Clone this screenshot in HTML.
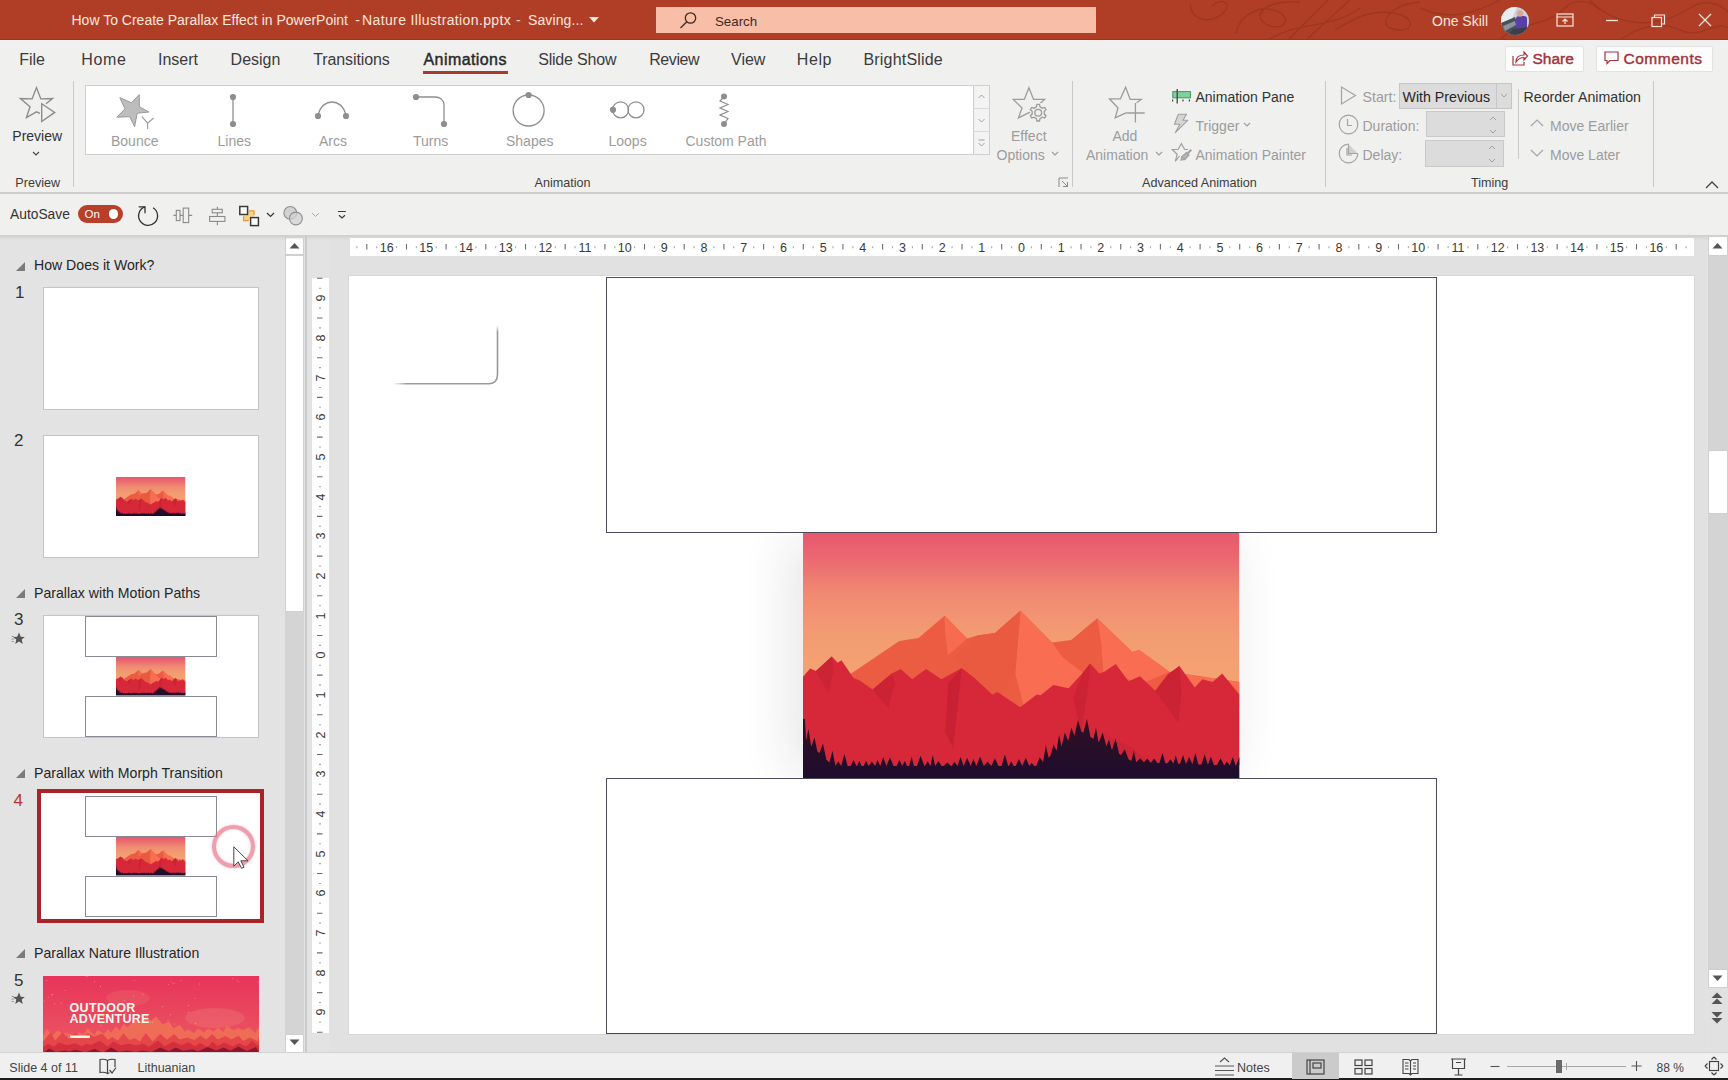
<!DOCTYPE html>
<html><head><meta charset="utf-8">
<style>
*{margin:0;padding:0;box-sizing:border-box}
html,body{width:1728px;height:1080px;overflow:hidden;background:#e3e3e3;font-family:"Liberation Sans",sans-serif;color:#262626;position:relative}
.a{position:absolute;white-space:nowrap;line-height:1}
svg.a{overflow:visible}
#title{left:0;top:0;width:1728px;height:40px;background:#b03e27;overflow:hidden}
#tabs{left:0;top:40px;width:1728px;height:40px;background:#f0f0ef}
#ribbon{left:0;top:80px;width:1728px;height:113px;background:#f0f0ef}
#rbline{left:0;top:192.3px;width:1728px;height:2.2px;background:#cdcdcd}
#qat{left:0;top:194px;width:1728px;height:41px;background:#f0f0ef}
.tt{color:#fbe6dc;font-size:14px;top:13px}
.tab{font-size:16px;top:51.5px;color:#3b3b3b}
.rl{font-size:14px;color:#9c9c9c}
.gl{font-size:12.6px;color:#3c3c3c;top:177px}
.sep{width:1px;background:#c9c9c9}
.rn{font-size:12.5px;color:#3a3a3a;line-height:12px}
.rv{transform:rotate(-90deg);text-align:center}
</style></head><body>
<svg width="0" height="0" style="position:absolute">
<defs>
<linearGradient id="sky" x1="0" y1="0" x2="0" y2="1"><stop offset="0" stop-color="#e8586e"/><stop offset="0.1" stop-color="#eb6870"/><stop offset="0.25" stop-color="#f08a72"/><stop offset="0.42" stop-color="#f39c72"/><stop offset="0.6" stop-color="#f4a373"/><stop offset="1" stop-color="#f5a673"/></linearGradient>
<linearGradient id="forest" x1="0" y1="0" x2="0" y2="1">
<stop offset="0" stop-color="#301024"/><stop offset="1" stop-color="#1e0c2c"/>
</linearGradient>
<symbol id="mtn" viewBox="0 0 436 245" preserveAspectRatio="none">
<rect width="436" height="245" fill="url(#sky)"/>
<polygon fill="#ec5c42" points="40,146 96.3,108.1 115.4,105 141.5,82.7 163.8,105.6 174,102.4 191.8,99.9 217.3,77.7 248.8,109.4 267.9,106.9 294,85.2 329,119 336,117 366,138.7 436,148.9 436,245 0,245"/>
<polygon fill="#f76b50" points="141.5,82.7 163.8,105.6 150,118 144.7,122.1 142,100"/>
<polygon fill="#f96e52" points="217.3,77.7 248.8,109.4 260,125 280,140 250,175 222,178 212,140"/>
<polygon fill="#e95a40" points="217.3,77.7 191.8,99.9 174,102.4 150,125 195,165 212,140"/>
<polygon fill="#f96e52" points="294,85.2 329,119 336,117 366,138.7 340,150 300,140 298,110"/>
<polygon fill="#f96e52" points="366,138.7 436,148.9 436,175 400,170"/>
<polygon fill="#d7283a" points="0,143.8 7.2,135.5 12.9,138 28.8,123.4 34.6,129.8 38.4,127.2 50.5,145 56.8,147.6 69.6,156.5 88.7,140.6 97.6,136.1 109,146.3 123,136.1 138.3,146.3 158.7,134.9 171.4,145 189.2,161.6 194.3,159 217,174.3 233.5,161.6 237.4,162.2 250.1,152 265.4,155.2 279.4,140 287,130.4 296,140.6 301,138.7 312.5,131 325.2,148.2 336.7,143.2 352,157.8 364.7,141.2 376.1,133 391.4,154.6 399,146.3 409.2,148.9 418.8,140.6 436,161.6 436,245 0,245"/>
<polygon fill="#cb2234" points="88.7,140.6 69.6,156.5 85,175 92,150"/>
<polygon fill="#cc2335" points="28.8,123.4 12.9,138 25,160 30,140"/>
<polygon fill="#c92133" points="158.7,134.9 145,150 142,200 150,215 155,170"/>
<polygon fill="#cb2234" points="287,130.4 279.4,140 270,165 278,200 284,160"/>
<polygon fill="#cb2234" points="376.1,133 364.7,141.2 352,157.8 375,190 378,160"/>
<polygon fill="#cf2637" points="300,200 330,215 345,230 320,230"/>
<polygon fill="url(#forest)" points="0.0,245.0 0.0,186.0 2.0,186.0 3.0,207.8 5.5,196.0 8.0,212.5 8.5,212.9 11.5,204.4 14.4,218.5 16.4,220.3 19.9,210.5 23.4,226.8 26.4,229.6 29.4,217.7 32.4,233.0 32.4,233.0 35.2,228.2 38.1,233.0 38.1,233.0 41.3,221.0 44.6,233.0 47.6,233.0 50.5,227.1 53.5,233.0 54.0,233.0 56.2,227.8 58.5,233.0 60.5,233.0 63.0,227.8 65.5,233.0 65.5,233.0 68.8,228.6 72.0,233.0 72.0,233.0 74.6,227.1 77.1,233.0 77.1,233.0 80.2,224.1 83.3,233.0 83.3,233.0 86.9,224.2 90.5,233.0 93.5,233.0 96.3,227.0 99.1,233.0 99.1,233.0 101.6,227.9 104.1,233.0 106.1,233.0 108.5,223.4 110.8,233.0 113.8,233.0 117.5,222.7 121.3,233.0 121.8,233.0 124.5,228.2 127.3,233.0 127.3,233.0 129.6,222.1 132.0,233.0 132.0,233.0 135.3,228.0 138.5,233.0 140.5,233.0 144.2,229.5 147.8,233.0 148.3,233.0 151.3,228.9 154.3,233.0 154.3,233.0 157.4,224.0 160.5,233.0 160.5,233.0 164.0,224.7 167.5,233.0 167.5,233.0 170.3,225.7 173.2,233.0 173.2,233.0 177.0,223.6 180.7,233.0 180.7,233.0 184.4,228.4 188.1,233.0 188.1,233.0 191.7,225.2 195.3,233.0 198.3,233.0 201.7,221.5 205.1,233.0 205.6,233.0 208.0,228.2 210.5,233.0 212.5,233.0 215.8,225.9 219.0,233.0 219.0,233.0 222.6,224.7 226.1,233.0 226.1,233.0 228.5,229.7 231.0,233.0 233.0,233.0 236.4,224.2 239.9,229.0 239.9,229.0 242.6,212.2 245.3,224.4 247.3,222.8 250.3,211.5 253.3,217.8 253.3,217.8 255.8,201.8 258.3,213.6 258.3,213.6 261.6,199.4 264.9,208.1 264.9,208.1 268.1,194.4 271.2,202.8 271.2,202.8 274.7,186.9 278.1,198.6 280.1,199.8 283.7,185.7 287.2,204.0 290.2,205.7 292.7,194.5 295.2,208.7 295.7,209.0 299.4,199.3 303.1,213.3 303.1,213.3 305.7,206.6 308.4,216.3 308.9,216.6 312.3,205.2 315.8,220.7 317.8,221.9 321.5,216.2 325.2,226.2 328.2,227.9 330.5,217.3 332.8,229.1 333.3,229.1 337.0,225.3 340.7,229.4 340.7,229.4 343.9,225.5 347.1,229.6 347.6,229.7 350.8,225.5 354.1,229.9 356.1,230.0 359.1,219.7 362.1,230.2 364.1,230.3 367.1,226.2 370.1,230.5 370.1,230.5 372.4,222.4 374.8,230.7 376.8,230.8 379.7,221.9 382.6,231.0 382.6,231.0 385.8,223.7 389.0,231.2 389.0,231.2 392.0,219.9 395.0,231.5 398.0,231.6 401.3,221.2 404.5,231.8 404.5,231.8 407.5,223.4 410.5,232.0 413.5,232.1 417.2,225.3 420.8,232.4 420.8,232.4 423.6,228.4 426.3,232.6 426.3,232.6 429.3,223.9 432.4,232.9 432.4,232.9 436.1,223.8 439.8,233.1 436.0,232.0 436.0,245.0"/>
</symbol>
</defs></svg>
<!-- TITLE BAR -->
<div id="title" class="a">
<svg class="a" style="left:1180px;top:0" width="548" height="40" viewBox="1180 0 548 40" fill="none" stroke="#8e3019" stroke-width="1.4" opacity="0.5">
<path d="M1190,4 C1192,22 1212,24 1224,12 C1233,3 1222,-3 1212,6"/>
<path d="M1236,34 C1240,12 1266,2 1282,14 C1294,26 1272,32 1262,21 C1255,12 1268,0 1300,2"/>
<path d="M1288,40 L1330,-2 M1306,40 L1352,-2 M1268,40 C1300,20 1330,30 1360,8"/>
<path d="M1335,30 C1355,18 1372,8 1398,14 C1420,20 1410,36 1390,28 C1378,22 1392,4 1420,2"/>
<path d="M1420,8 C1450,22 1478,12 1500,0"/>
<path d="M1500,40 C1515,22 1545,28 1565,8 C1575,-2 1590,0 1600,10"/>
<path d="M1590,0 C1610,22 1650,34 1690,8 C1705,-2 1720,4 1728,12"/>
<path d="M1620,40 C1640,25 1665,22 1680,30 C1700,40 1715,20 1728,28"/>
</svg>
</div>
<div class="a tt" style="left:71.5px;">How To Create Parallax Effect in PowerPoint</div><div class="a tt" style="left:355.3px;">-</div><div class="a tt" style="left:362px;letter-spacing:0.38px">Nature Illustration.pptx</div><div class="a tt" style="left:516px;">-</div><div class="a tt" style="left:528px;letter-spacing:0.1px">Saving...</div>
<svg class="a" style="left:589px;top:16.5px" width="10" height="6" viewBox="0 0 10 6"><path d="M0,0 L10,0 L5,5.5Z" fill="#fbe6dc"/></svg>
<div class="a" style="left:656px;top:7px;width:440px;height:26px;background:#f8bea7"></div>
<svg class="a" style="left:678px;top:11px" width="20" height="18" viewBox="0 0 20 18" fill="none" stroke="#3d2a24" stroke-width="1.3"><circle cx="12.5" cy="7" r="5.2"/><path d="M8.8,10.7 L2.5,17"/></svg>
<div class="a" style="left:715px;top:14.5px;font-size:13.3px;color:#3d2a24">Search</div>
<div class="a tt" style="left:1432px;top:14px;">One Skill</div>
<svg class="a" style="left:1500.5px;top:6.5px" width="28" height="28" viewBox="0 0 28 28"><defs><clipPath id="av"><circle cx="14" cy="14" r="14"/></clipPath></defs><g clip-path="url(#av)"><rect width="28" height="28" fill="#c9d2dc"/><polygon points="0,0 16,0 10,14 0,18" fill="#e8edf2"/><polygon points="0,16 14,10 18,20 10,28 0,28" fill="#4a5058"/><polygon points="2,19 14,14 15,18 4,24" fill="#8c959e"/><rect x="15" y="9" width="11" height="14" rx="3" fill="#5b3fa8"/><circle cx="19" cy="6.5" r="3.2" fill="#d8a890"/><polygon points="12,22 28,20 28,28 8,28" fill="#3a3f4a"/></g></svg>
<svg class="a" style="left:1556px;top:13px" width="19" height="14" viewBox="0 0 19 14" fill="none" stroke="#fbe6dc" stroke-width="1.2"><rect x="1" y="1" width="16" height="12"/><path d="M1,4 H17 M9,11 V6 M6.5,8.5 L9,6 L11.5,8.5"/></svg>
<svg class="a" style="left:1605px;top:19px" width="14" height="3" viewBox="0 0 14 3"><path d="M1,1.5 H13" stroke="#fbe6dc" stroke-width="1.3"/></svg>
<svg class="a" style="left:1651px;top:14px" width="15" height="13" viewBox="0 0 15 13" fill="none" stroke="#fbe6dc" stroke-width="1.2"><rect x="1" y="3.5" width="9.5" height="9"/><path d="M3.5,3.5 V1 H13.5 V10 H10.5"/></svg>
<svg class="a" style="left:1698px;top:13px" width="14" height="14" viewBox="0 0 14 14"><path d="M1,1 L13,13 M13,1 L1,13" stroke="#fbe6dc" stroke-width="1.3"/></svg>

<div class="a" style="left:0;top:39.3px;width:1728px;height:0.8px;background:#8e3a2a"></div>
<!-- TABS -->
<div id="tabs" class="a"></div>
<div class="a tab" style="left:19.2px">File</div>
<div class="a tab" style="left:81.2px;letter-spacing:0.7px">Home</div>
<div class="a tab" style="left:158px">Insert</div>
<div class="a tab" style="left:230.6px">Design</div>
<div class="a tab" style="left:313.2px;letter-spacing:-0.1px">Transitions</div>
<div class="a tab" style="left:423.5px;color:#2a2a2a;font-size:16px;top:52.2px;letter-spacing:0.42px;-webkit-text-stroke:0.45px #2a2a2a">Animations</div>
<div class="a" style="left:423px;top:70.8px;width:84.5px;height:3.2px;background:#a83a30"></div>
<div class="a tab" style="left:538.2px;letter-spacing:-0.2px">Slide Show</div>
<div class="a tab" style="left:649.2px;letter-spacing:-0.4px">Review</div>
<div class="a tab" style="left:731px">View</div>
<div class="a tab" style="left:796.8px;letter-spacing:0.6px">Help</div>
<div class="a tab" style="left:863.5px;letter-spacing:0.18px">BrightSlide</div>
<div class="a" style="left:1505px;top:46px;width:79px;height:26px;background:#fcfcfc;border:1px solid #e2e2e2;border-radius:2px"></div>
<svg class="a" style="left:1512px;top:50px" width="16" height="16" viewBox="0 0 16 16" fill="none" stroke="#a8343a" stroke-width="1.2"><path d="M1,6 V15 H12 V12"/><path d="M4,12 C4,7 7,5 12,5 V2 L15.5,6 L12,10 V7.5 C8,7.5 6,9 4,12Z"/></svg>
<div class="a" style="left:1532.5px;top:51px;font-size:15.5px;color:#a1313a;-webkit-text-stroke:0.4px #a1313a">Share</div>
<div class="a" style="left:1596px;top:46px;width:117px;height:26px;background:#fcfcfc;border:1px solid #e2e2e2;border-radius:2px"></div>
<svg class="a" style="left:1604px;top:51px" width="15" height="14" viewBox="0 0 15 14" fill="none" stroke="#a8343a" stroke-width="1.2"><path d="M1,1 H14 V9.5 H6 L3,12.5 V9.5 H1Z"/></svg>
<div class="a" style="left:1623.5px;top:51px;font-size:15.5px;color:#a1313a;-webkit-text-stroke:0.4px #a1313a;letter-spacing:0.5px">Comments</div>
<!-- RIBBON -->
<div id="ribbon" class="a"></div>

<!-- Preview group -->
<svg class="a" style="left:10px;top:82px" width="60" height="45" viewBox="10 82 60 45" fill="none" stroke="#8c8c8c" stroke-width="1.4" stroke-linejoin="miter"><path d="M40,113.4 L36.5,111.8 L26.5,117.6 L30,106.7 L20.4,98.5 L32.1,98.9 L36.5,87.6 L40.8,98.9 L52.5,98.5 L46,103.7"/><path d="M41.7,103.7 V121.5 L54.7,112.4 Z"/></svg>
<div class="a" style="left:12.3px;top:128.5px;font-size:14px;color:#333">Preview</div>
<svg class="a" style="left:32px;top:151px" width="8" height="5" viewBox="0 0 8 5"><path d="M1,1 L4,4 L7,1" fill="none" stroke="#444" stroke-width="1.1"/></svg>
<div class="a gl" style="left:15.3px">Preview</div>
<div class="a sep" style="left:73px;top:81px;height:106px"></div>
<!-- Gallery -->
<div class="a" style="left:85px;top:84.5px;width:889px;height:70.5px;background:#fff;border:1px solid #cfcfcf;border-right:none"></div>
<div class="a" style="left:973px;top:84.5px;width:17px;height:70.5px;background:#f3f3f3;border:1px solid #cfcfcf"></div>
<div class="a" style="left:973px;top:107.5px;width:17px;height:1px;background:#d8d8d8"></div>
<div class="a" style="left:973px;top:130.5px;width:17px;height:1px;background:#d8d8d8"></div>
<svg class="a" style="left:977px;top:92px" width="9" height="60" viewBox="0 0 9 60" fill="none" stroke="#a0a0a0" stroke-width="1"><path d="M1.5,6 L4.5,3 L7.5,6"/><path d="M1.5,27 L4.5,30 L7.5,27"/><path d="M1.5,48 H7.5 M1.5,51 L4.5,54 L7.5,51"/></svg>
<!-- gallery icons -->
<svg class="a" style="left:110px;top:88px" width="50" height="45" viewBox="110 88 50 45"><path d="M139.3,94.6 L139.3,106.7 L148.9,112 L137.2,113.25 L134.6,126.7 L129.8,116.7 L116.8,117.2 L125,108.9 L119.8,97.6 L131.5,102.8 Z" fill="#bdbdbd" stroke="#9a9a9a" stroke-width="1" stroke-linejoin="miter"/><path d="M142,116.7 L147.6,123.2 L153.7,118 M147.6,123.2 V128.9" fill="none" stroke="#9a9a9a" stroke-width="1.1"/></svg>
<svg class="a" style="left:228px;top:93px" width="10" height="34" viewBox="0 0 10 34"><circle cx="5" cy="4" r="3.1" fill="#8e8e8e"/><circle cx="5" cy="31" r="3.1" fill="#8e8e8e"/><path d="M5,4 V31" stroke="#8e8e8e" stroke-width="1.3"/></svg>
<svg class="a" style="left:314px;top:99px" width="36" height="21" viewBox="0 0 36 21"><path d="M4,17 C6,6 13,3 18,3 C23,3 30,6 32,17" fill="none" stroke="#8e8e8e" stroke-width="1.3"/><circle cx="4" cy="17" r="3.1" fill="#8e8e8e"/><circle cx="32" cy="17" r="3.1" fill="#8e8e8e"/></svg>
<svg class="a" style="left:412px;top:93px" width="37" height="34" viewBox="0 0 37 34"><path d="M4,4 H23 C28,4 32,7 32,12 V31" fill="none" stroke="#8e8e8e" stroke-width="1.3"/><circle cx="4" cy="4" r="3.1" fill="#8e8e8e"/><circle cx="32" cy="31" r="3.1" fill="#8e8e8e"/></svg>
<svg class="a" style="left:510px;top:92px" width="38" height="38" viewBox="0 0 38 38"><circle cx="18.6" cy="18.5" r="15.5" fill="none" stroke="#8e8e8e" stroke-width="1.3"/><circle cx="18.6" cy="3" r="3.1" fill="#8e8e8e"/></svg>
<svg class="a" style="left:606px;top:98px" width="42" height="24" viewBox="0 0 42 24"><circle cx="14.6" cy="11.8" r="8" fill="none" stroke="#8e8e8e" stroke-width="1.3"/><circle cx="30" cy="11.8" r="8" fill="none" stroke="#8e8e8e" stroke-width="1.3"/><circle cx="7" cy="11.8" r="3.1" fill="#8e8e8e"/></svg>
<svg class="a" style="left:716px;top:93px" width="16" height="34" viewBox="0 0 16 34"><circle cx="8" cy="3.5" r="3" fill="#8e8e8e"/><circle cx="8" cy="31" r="3" fill="#8e8e8e"/><path d="M8,3.5 L4,8 L12,11.5 L4,15 L12,18.5 L4,22 L12,25.5 L8,31" fill="none" stroke="#8e8e8e" stroke-width="1.2"/></svg>
<div class="a rl" style="left:111px;top:133.5px">Bounce</div>
<div class="a rl" style="left:217.5px;top:133.5px">Lines</div>
<div class="a rl" style="left:319px;top:133.5px">Arcs</div>
<div class="a rl" style="left:413px;top:133.5px">Turns</div>
<div class="a rl" style="left:506px;top:133.5px">Shapes</div>
<div class="a rl" style="left:608.5px;top:133.5px">Loops</div>
<div class="a rl" style="left:685.5px;top:133.5px">Custom Path</div>
<div class="a gl" style="left:534.5px">Animation</div>
<!-- Effect options -->
<svg class="a" style="left:1005px;top:82px" width="50" height="45" viewBox="1005 82 50 45" fill="none" stroke="#9c9c9c" stroke-width="1.3" stroke-linejoin="miter"><path d="M1030,112.2 L1018.5,117.9 L1022,108 L1013.3,99.4 L1024.3,99.4 L1028.9,87.8 L1033.6,99.4 L1044.6,99.4 L1040.5,103"/><path d="M1036.39,106.77 L1036.89,104.40 L1039.51,104.40 L1040.01,106.77 L1042.43,108.17 L1044.73,107.41 L1046.04,109.69 L1044.24,111.31 L1044.24,114.09 L1046.04,115.71 L1044.73,117.99 L1042.43,117.23 L1040.01,118.63 L1039.51,121.00 L1036.89,121.00 L1036.39,118.63 L1033.97,117.23 L1031.67,117.99 L1030.36,115.71 L1032.16,114.09 L1032.16,111.31 L1030.36,109.69 L1031.67,107.41 L1033.97,108.17Z"/><circle cx="1038.2" cy="112.7" r="3.4"/></svg>
<div class="a rl" style="left:1011px;top:128.5px">Effect</div>
<div class="a rl" style="left:996.5px;top:148px">Options</div>
<svg class="a" style="left:1051px;top:151px" width="8" height="5" viewBox="0 0 8 5"><path d="M1,1 L4,4 L7,1" fill="none" stroke="#9c9c9c" stroke-width="1.1"/></svg>
<svg class="a" style="left:1058px;top:177px" width="11" height="11" viewBox="0 0 11 11" fill="none" stroke="#8a8a8a" stroke-width="1"><path d="M1,10 V1 H10 M4,4 L9.5,9.5 M9.5,5 V9.5 H5"/></svg>
<div class="a sep" style="left:1072px;top:81px;height:106px"></div>
<!-- Advanced Animation -->
<svg class="a" style="left:1100px;top:82px" width="50" height="45" viewBox="1100 82 50 45" fill="none" stroke="#9c9c9c" stroke-width="1.3" stroke-linejoin="miter"><path d="M1126.5,112.7 L1115.2,117.9 L1118,108 L1109.4,98.8 L1120.4,98.8 L1125.6,87.2 L1130.2,99.4 L1141.2,99.4 L1136.6,102.8"/><path d="M1135.4,103 V122.5 M1126.7,113 H1144.7"/></svg>
<div class="a rl" style="left:1112.5px;top:128.5px">Add</div>
<div class="a rl" style="left:1086px;top:148px">Animation</div>
<svg class="a" style="left:1155px;top:151px" width="8" height="5" viewBox="0 0 8 5"><path d="M1,1 L4,4 L7,1" fill="none" stroke="#9c9c9c" stroke-width="1.1"/></svg>
<svg class="a" style="left:1168px;top:86px" width="26" height="20" viewBox="1168 86 26 20"><rect x="1172.8" y="91.6" width="17.6" height="6.2" fill="#7fd09b" stroke="#3c9a5f" stroke-width="1"/><path d="M1177.2,89 V103.5" stroke="#444" stroke-width="1.3"/><path d="M1172.6,99.5 V101.5 M1183,99.5 V101.5 M1189.4,99.5 V101.5" stroke="#444" stroke-width="1.2"/></svg>
<div class="a" style="left:1195.5px;top:89.5px;font-size:14px;color:#333">Animation Pane</div>
<svg class="a" style="left:1170px;top:110px" width="22" height="26" viewBox="1170 110 22 26"><path d="M1186.5,114.3 L1178.4,114.3 L1174.4,124.3 L1179.9,124.3 L1175.3,132.7 L1187.7,120.3 L1182.9,120.3 Z" fill="#d6d6d6" stroke="#a0a0a0" stroke-width="1.1" stroke-linejoin="round"/></svg>
<div class="a rl" style="left:1195.5px;top:118.5px">Trigger</div>
<svg class="a" style="left:1243px;top:122px" width="8" height="5" viewBox="0 0 8 5"><path d="M1,1 L4,4 L7,1" fill="none" stroke="#9c9c9c" stroke-width="1.1"/></svg>
<svg class="a" style="left:1168px;top:140px" width="26" height="26" viewBox="1168 140 26 26" fill="none" stroke="#a0a0a0" stroke-width="1.2"><path d="M1179.5,156 L1175.3,161.3 L1177.1,154.3 L1172.3,149.5 L1178,149.5 L1181.4,143.8 L1184.7,149.5 L1188,149.5"/><path d="M1182,156.5 L1186.5,152.5 L1189,155 L1184.8,159.5 Z" fill="#b4b4b4"/><path d="M1187.5,153.5 L1191.3,149.7" stroke-width="2"/><path d="M1182,156.5 L1181,160 L1184.8,159.5" fill="#b4b4b4"/></svg>
<div class="a rl" style="left:1195.5px;top:148px">Animation Painter</div>
<div class="a gl" style="left:1142px">Advanced Animation</div>
<div class="a sep" style="left:1325px;top:81px;height:106px"></div>
<!-- Timing -->
<svg class="a" style="left:1340px;top:86px" width="17" height="19" viewBox="0 0 17 19" fill="none" stroke="#a4a4a4" stroke-width="1.2"><path d="M1.5,1 V18 L15.5,9.5Z"/></svg>
<div class="a rl" style="left:1362.5px;top:90px;font-size:14.2px">Start:</div>
<div class="a" style="left:1399px;top:82.5px;width:113px;height:26px;background:#dcdcdc;border:1px solid #c6c6c6"></div>
<div class="a" style="left:1496px;top:83px;width:1px;height:25px;background:#c6c6c6"></div>
<svg class="a" style="left:1500px;top:93px" width="8" height="5" viewBox="0 0 8 5"><path d="M1,1 L4,4 L7,1" fill="none" stroke="#a0a0a0" stroke-width="1"/></svg>
<div class="a" style="left:1402.5px;top:89.5px;font-size:14.2px;color:#262626">With Previous</div>
<svg class="a" style="left:1338px;top:114px" width="21" height="21" viewBox="0 0 21 21" fill="none" stroke="#a4a4a4" stroke-width="1.2"><circle cx="10.5" cy="10.5" r="9.3"/><path d="M9.5,5 V11.5 H14"/></svg>
<div class="a rl" style="left:1362.5px;top:118.5px">Duration:</div>
<div class="a" style="left:1426px;top:111px;width:78.5px;height:26px;background:#dcdcdc;border:1px solid #c9c9c9"></div>
<svg class="a" style="left:1488px;top:115px" width="10" height="20" viewBox="0 0 10 20" fill="none" stroke="#a0a0a0" stroke-width="1"><path d="M2,5 L5,2 L8,5 M2,15 L5,18 L8,15"/></svg>
<svg class="a" style="left:1338px;top:143px" width="21" height="21" viewBox="0 0 21 21" fill="none" stroke="#a4a4a4" stroke-width="1.2"><path d="M10.5,1.2 A9.3,9.3 0 1 0 19.8,10.5"/><path d="M10.5,1.2 V10.5 H19.8" fill="#d0d0d0"/><path d="M9,5 V12 H14"/></svg>
<div class="a rl" style="left:1362.5px;top:148px">Delay:</div>
<div class="a" style="left:1424.5px;top:139.5px;width:79px;height:27px;background:#dcdcdc;border:1px solid #c9c9c9"></div>
<svg class="a" style="left:1487px;top:144px" width="10" height="20" viewBox="0 0 10 20" fill="none" stroke="#a0a0a0" stroke-width="1"><path d="M2,5 L5,2 L8,5 M2,15 L5,18 L8,15"/></svg>
<div class="a sep" style="left:1518px;top:89px;height:70px"></div>
<div class="a" style="left:1523.5px;top:89.5px;font-size:14.2px;color:#333">Reorder Animation</div>
<svg class="a" style="left:1530px;top:119px" width="14" height="8" viewBox="0 0 14 8"><path d="M1,7 L7,1 L13,7" fill="none" stroke="#a4a4a4" stroke-width="1.2"/></svg>
<div class="a rl" style="left:1550px;top:118.5px">Move Earlier</div>
<svg class="a" style="left:1530px;top:149px" width="14" height="8" viewBox="0 0 14 8"><path d="M1,1 L7,7 L13,1" fill="none" stroke="#a4a4a4" stroke-width="1.2"/></svg>
<div class="a rl" style="left:1550px;top:148px">Move Later</div>
<div class="a gl" style="left:1471px">Timing</div>
<div class="a sep" style="left:1653px;top:81px;height:106px"></div>
<svg class="a" style="left:1705px;top:181px" width="14" height="8" viewBox="0 0 14 8"><path d="M1,7 L7,1 L13,7" fill="none" stroke="#444" stroke-width="1.3"/></svg>
<!-- QAT -->
<div id="qat" class="a"></div>
<div id="rbline" class="a"></div>
<div class="a" style="left:10px;top:208px;font-size:13.8px;color:#333">AutoSave</div>
<div class="a" style="left:77.5px;top:204.5px;width:45.5px;height:18.5px;border-radius:9.5px;background:#b8402a"></div>
<div class="a" style="left:84.5px;top:208.5px;font-size:11.5px;color:#fff">On</div>
<div class="a" style="left:108.5px;top:209px;width:9.5px;height:9.5px;border-radius:50%;background:#fff"></div>
<svg class="a" style="left:130px;top:200px" width="30" height="30" viewBox="130 200 30 30" fill="none" stroke="#333" stroke-width="1.3"><path d="M153.1,207.8 A9.5,9.5 0 1 1 145,206.9"/><path d="M138.7,206.9 H145 V213.3"/></svg>
<svg class="a" style="left:170px;top:204px" width="26" height="22" viewBox="170 204 26 22" fill="#f0f0ef" stroke="#8a8a8a" stroke-width="1.1"><path d="M173.4,215.4 H176.3 M180,215.4 H183.2 M188.7,215.4 H192.2"/><rect x="176.3" y="210.4" width="3.7" height="10.2"/><rect x="183.2" y="208.1" width="5.5" height="14.5"/></svg>
<svg class="a" style="left:206px;top:204px" width="22" height="24" viewBox="206 204 22 24" fill="#f0f0ef" stroke="#8a8a8a" stroke-width="1.1"><path d="M217.4,206.7 V209.3 M217.4,212.8 V216.5 M217.4,221.4 V225.2"/><rect x="212.2" y="209.3" width="10.1" height="3.5"/><rect x="209.6" y="216.5" width="15.3" height="4.9"/></svg>
<svg class="a" style="left:236px;top:203px" width="26" height="26" viewBox="236 203 26 26" fill="none"><path d="M248.4,210.8 H254 V216.5 H249.5 V220.6 H243.6 V215.5 H248.4Z" fill="#fbd27a" stroke="none"/><path d="M249,210.8 H254 V215.2 M243.6,216.2 V220.6 H248.6" stroke="#e89a3a" stroke-width="1.2"/><rect x="239.8" y="206.5" width="7.8" height="8" fill="#fff" stroke="#3a3a3a" stroke-width="1.5"/><rect x="250.6" y="217.6" width="7.8" height="8" fill="#fff" stroke="#3a3a3a" stroke-width="1.5"/></svg>
<svg class="a" style="left:266px;top:212px" width="9" height="6" viewBox="0 0 9 6"><path d="M1,1 L4.5,4.5 L8,1" fill="none" stroke="#333" stroke-width="1.2"/></svg>
<svg class="a" style="left:280px;top:203px" width="26" height="26" viewBox="280 203 26 26" stroke="#8e8e8e" stroke-width="1.1"><circle cx="290.3" cy="212.9" r="6.4" fill="#d2d2d2"/><circle cx="295.9" cy="218.5" r="6.4" fill="#d2d2d2" fill-opacity="0.75"/></svg>
<svg class="a" style="left:311px;top:212px" width="9" height="6" viewBox="0 0 9 6"><path d="M1,1 L4.5,4.5 L8,1" fill="none" stroke="#aaa" stroke-width="1"/></svg>
<svg class="a" style="left:334px;top:207px" width="16" height="14" viewBox="334 207 16 14" fill="none" stroke="#3a3a3a" stroke-width="1.2"><path d="M337.9,211.5 H345.9 M339,215.2 L342,218 L345,215.2"/></svg>

<!-- LEFT PANE -->
<div class="a" style="left:0;top:235px;width:306px;height:817px;background:#e3e3e3"></div>
<div class="a" style="left:284.5px;top:236.5px;width:19.5px;height:815px;background:#d4d4d4"></div>
<div class="a" style="left:284.5px;top:255px;width:19.5px;height:357px;background:#fff;border:1px solid #cfcfcf"></div>
<div class="a" style="left:284.5px;top:236.5px;width:19.5px;height:18.5px;background:#fff;border:1px solid #cfcfcf"></div>
<svg class="a" style="left:289px;top:242px" width="11" height="7" viewBox="0 0 11 7"><path d="M0.5,6.5 L5.5,1 L10.5,6.5Z" fill="#555"/></svg>
<div class="a" style="left:284.5px;top:1033.5px;width:19.5px;height:19px;background:#fff;border:1px solid #cfcfcf"></div>
<svg class="a" style="left:289px;top:1039px" width="11" height="7" viewBox="0 0 11 7"><path d="M0.5,0.5 L5.5,6 L10.5,0.5Z" fill="#555"/></svg>
<div class="a" style="left:305px;top:235px;width:1.5px;height:817px;background:#c9c9c9"></div>

<svg class="a" style="left:16px;top:262px" width="9" height="9" viewBox="0 0 9 9"><path d="M9,0 V9 H0Z" fill="#7a7a7a"/></svg>
<div class="a" style="left:34px;top:258px;font-size:14.1px;color:#262626">How Does it Work?</div>
<div class="a" style="left:15px;top:284px;font-size:17px;color:#333">1</div>
<div class="a" style="left:42.5px;top:287px;width:216.5px;height:122.5px;background:#fff;border:1px solid #c4c4c4"></div>

<div class="a" style="left:14px;top:432px;font-size:17px;color:#333">2</div>
<div class="a" style="left:42.5px;top:434.5px;width:216.5px;height:123px;background:#fff;border:1px solid #c4c4c4"></div>
<svg class="a" style="left:116px;top:476.5px" width="69.5" height="39" preserveAspectRatio="none"><use href="#mtn" width="69.5" height="39"/></svg>

<svg class="a" style="left:16px;top:589px" width="9" height="9" viewBox="0 0 9 9"><path d="M9,0 V9 H0Z" fill="#7a7a7a"/></svg>
<div class="a" style="left:34px;top:585.5px;font-size:14.1px;color:#262626">Parallax with Motion Paths</div>
<div class="a" style="left:14px;top:611px;font-size:17px;color:#333">3</div>
<svg class="a" style="left:11px;top:632px" width="14" height="13" viewBox="0 0 14 13"><path d="M8,0.5 L9.8,4.8 L13.8,5 L10.7,7.6 L11.7,12 L8,9.5 L4.3,12 L5.3,7.6 L2.2,5 L6.2,4.8Z" fill="#555"/><path d="M0.5,4.5 H3 M0.5,7 H3.5 M0.5,9.5 H3" stroke="#888" stroke-width="0.8"/></svg>
<div class="a" style="left:42.5px;top:614.5px;width:216.5px;height:123px;background:#fff;border:1px solid #c4c4c4"></div>
<div class="a" style="left:84.5px;top:615.5px;width:132.5px;height:41.5px;background:#fff;border:1px solid #8a8a96"></div>
<svg class="a" style="left:116px;top:657px" width="69.5" height="38.5" preserveAspectRatio="none"><use href="#mtn" width="69.5" height="38.5"/></svg>
<div class="a" style="left:84.5px;top:695.5px;width:132.5px;height:41.5px;background:#fff;border:1px solid #8a8a96"></div>

<svg class="a" style="left:16px;top:769px" width="9" height="9" viewBox="0 0 9 9"><path d="M9,0 V9 H0Z" fill="#7a7a7a"/></svg>
<div class="a" style="left:34px;top:765.5px;font-size:14.1px;color:#262626">Parallax with Morph Transition</div>
<div class="a" style="left:13.5px;top:791.5px;font-size:17px;color:#b8322e">4</div>
<div class="a" style="left:37px;top:789px;width:227px;height:134px;background:#fff;border:4.5px solid #a82428"></div>
<div class="a" style="left:84.5px;top:795.5px;width:132.5px;height:41.5px;background:#fff;border:1px solid #8a8a96"></div>
<svg class="a" style="left:116px;top:837px" width="69.5" height="38.5" preserveAspectRatio="none"><use href="#mtn" width="69.5" height="38.5"/></svg>
<div class="a" style="left:84.5px;top:875.5px;width:132.5px;height:41.5px;background:#fff;border:1px solid #8a8a96"></div>
<div class="a" style="left:211.6px;top:824.8px;width:43px;height:43px;border-radius:50%;border:4px solid rgba(232,120,140,0.72);box-shadow:0 0 2.5px rgba(232,120,140,0.55), inset 0 0 2.5px rgba(232,120,140,0.55)"></div>
<svg class="a" style="left:232.6px;top:846.4px" width="17" height="24" viewBox="0 0 17 24"><path d="M0.8,0.8 V20.2 L5.2,15.8 L8.6,22.4 L11,21.2 L7.8,14.8 L15,14.8 Z" fill="#fff" stroke="#333" stroke-width="0.9" stroke-linejoin="miter"/></svg>

<svg class="a" style="left:16px;top:949px" width="9" height="9" viewBox="0 0 9 9"><path d="M9,0 V9 H0Z" fill="#7a7a7a"/></svg>
<div class="a" style="left:34px;top:945.5px;font-size:14.1px;color:#262626">Parallax Nature Illustration</div>
<div class="a" style="left:14px;top:971.5px;font-size:17px;color:#333">5</div>
<svg class="a" style="left:11px;top:992px" width="14" height="13" viewBox="0 0 14 13"><path d="M8,0.5 L9.8,4.8 L13.8,5 L10.7,7.6 L11.7,12 L8,9.5 L4.3,12 L5.3,7.6 L2.2,5 L6.2,4.8Z" fill="#555"/><path d="M0.5,4.5 H3 M0.5,7 H3.5 M0.5,9.5 H3" stroke="#888" stroke-width="0.8"/></svg>
<div class="a" style="left:42.5px;top:975.5px;width:216px;height:77px;overflow:hidden">
<svg width="216" height="122" viewBox="0 0 216 122" style="position:absolute;left:0;top:0">
<defs><linearGradient id="t5" x1="0" y1="0" x2="0" y2="1"><stop offset="0" stop-color="#e8345a"/><stop offset="0.45" stop-color="#ea4f60"/><stop offset="0.75" stop-color="#ee6a64"/><stop offset="1" stop-color="#f07a66"/></linearGradient></defs>
<rect width="216" height="122" fill="url(#t5)"/>
<ellipse cx="172" cy="42" rx="30" ry="10" fill="#f27a78" opacity="0.35"/>
<ellipse cx="85" cy="22" rx="22" ry="8" fill="#f07070" opacity="0.3"/>
<polygon fill="#ef6d57" points="0.0,60.0 3.5,52.7 9.6,59.4 14.6,54.6 20.2,58.1 23.6,56.7 29.9,59.0 35.9,56.8 40.7,58.2 44.6,52.1 51.3,59.6 54.4,53.7 61.1,57.9 65.0,53.0 68.1,57.0 72.8,50.7 76.8,54.4 80.7,48.0 84.8,51.6 91.2,43.2 96.7,46.7 103.7,38.7 107.2,45.3 113.1,40.5 119.8,48.4 126.1,45.6 130.3,52.3 136.9,48.7 141.9,55.8 145.0,53.4 151.2,57.3 154.9,52.6 160.7,56.6 165.2,52.5 170.3,55.5 175.3,51.7 180.3,56.3 183.5,49.6 190.4,54.6 195.0,52.1 200.0,54.1 206.1,51.2 212.5,57.2 216.0,50.5 216.0,122.0 0.0,122.0"/>
<polygon fill="#e4464a" points="0.0,65.5 7.8,56.3 12.1,64.5 19.4,56.6 26.1,62.7 32.5,56.3 38.8,62.6 44.5,57.3 51.4,60.7 59.2,57.5 65.0,63.8 69.2,61.1 75.0,64.4 80.5,57.1 86.6,64.2 91.6,62.1 96.9,65.5 102.9,57.0 109.6,65.5 117.2,58.1 124.1,63.6 131.2,58.1 136.6,63.4 144.4,61.5 151.5,64.1 157.3,59.5 163.3,63.5 169.3,57.9 174.7,63.6 182.3,59.9 188.6,63.5 195.5,59.8 200.3,65.1 207.1,61.5 214.8,65.3 216.0,60.7 216.0,122.0 0.0,122.0"/>
<polygon fill="#d32f3c" points="0.0,71.0 5.2,67.8 11.2,70.7 15.5,66.5 24.1,69.3 31.9,67.3 38.6,70.4 43.5,67.8 48.5,69.1 56.7,64.8 64.7,70.6 70.2,65.6 77.9,69.2 86.3,67.8 93.3,69.6 99.8,67.5 106.2,70.8 114.9,64.6 121.6,70.4 130.2,65.8 138.6,69.2 145.1,66.5 152.1,70.1 156.9,66.9 165.0,70.9 169.2,65.6 174.6,69.9 181.0,66.8 190.0,70.6 196.0,67.3 203.2,70.4 209.0,65.1 214.6,69.8 216.0,67.8 216.0,122.0 0.0,122.0"/>
<polygon fill="#8e1530" points="0.0,77.0 6.2,72.6 13.0,75.9 21.2,74.4 26.2,75.5 32.5,73.8 42.5,76.2 51.7,72.9 59.9,76.7 68.1,71.5 75.7,75.7 84.0,74.4 92.8,75.9 99.3,74.5 108.7,76.1 117.3,71.4 125.8,75.3 132.8,71.5 140.0,74.8 149.4,73.2 155.1,75.2 164.9,71.1 173.1,74.5 180.6,71.5 187.3,74.7 195.3,70.6 203.7,75.0 213.0,70.9 216.0,76.7 216.0,122.0 0.0,122.0"/>
<circle cx="100.0" cy="18.7" r="0.45" fill="#fff" opacity="0.7"/><circle cx="29.9" cy="43.3" r="0.45" fill="#fff" opacity="0.7"/><circle cx="1.4" cy="25.1" r="0.45" fill="#fff" opacity="0.7"/><circle cx="194.0" cy="4.0" r="0.45" fill="#fff" opacity="0.7"/><circle cx="119.7" cy="30.8" r="0.45" fill="#fff" opacity="0.7"/><circle cx="8.8" cy="19.0" r="0.45" fill="#fff" opacity="0.7"/><circle cx="152.0" cy="22.6" r="0.45" fill="#fff" opacity="0.7"/><circle cx="156.6" cy="7.9" r="0.45" fill="#fff" opacity="0.7"/><circle cx="51.4" cy="5.5" r="0.45" fill="#fff" opacity="0.7"/><circle cx="109.4" cy="46.2" r="0.45" fill="#fff" opacity="0.7"/><circle cx="127.5" cy="38.7" r="0.45" fill="#fff" opacity="0.7"/><circle cx="82.9" cy="37.3" r="0.45" fill="#fff" opacity="0.7"/><circle cx="22.0" cy="14.6" r="0.45" fill="#fff" opacity="0.7"/><circle cx="145.6" cy="36.3" r="0.45" fill="#fff" opacity="0.7"/><circle cx="91.1" cy="4.4" r="0.45" fill="#fff" opacity="0.7"/><circle cx="57.6" cy="10.5" r="0.45" fill="#fff" opacity="0.7"/><circle cx="60.7" cy="40.5" r="0.45" fill="#fff" opacity="0.7"/><circle cx="43.1" cy="44.3" r="0.45" fill="#fff" opacity="0.7"/><circle cx="189.9" cy="2.7" r="0.45" fill="#fff" opacity="0.7"/><circle cx="81.8" cy="24.6" r="0.45" fill="#fff" opacity="0.7"/><circle cx="5.1" cy="21.2" r="0.45" fill="#fff" opacity="0.7"/><circle cx="195.8" cy="5.6" r="0.45" fill="#fff" opacity="0.7"/><circle cx="128.9" cy="6.1" r="0.45" fill="#fff" opacity="0.7"/><circle cx="125.0" cy="44.8" r="0.45" fill="#fff" opacity="0.7"/><circle cx="43.9" cy="0.4" r="0.45" fill="#fff" opacity="0.7"/><circle cx="18.0" cy="27.0" r="0.45" fill="#fff" opacity="0.7"/><circle cx="3.8" cy="4.2" r="0.45" fill="#fff" opacity="0.7"/><circle cx="107.3" cy="46.0" r="0.45" fill="#fff" opacity="0.7"/><circle cx="90.7" cy="19.9" r="0.45" fill="#fff" opacity="0.7"/><circle cx="138.0" cy="4.7" r="0.45" fill="#fff" opacity="0.7"/><circle cx="125.2" cy="8.6" r="0.45" fill="#fff" opacity="0.7"/><circle cx="131.5" cy="47.9" r="0.45" fill="#fff" opacity="0.7"/><circle cx="11.7" cy="27.8" r="0.45" fill="#fff" opacity="0.7"/><circle cx="131.0" cy="7.5" r="0.45" fill="#fff" opacity="0.7"/><circle cx="58.0" cy="49.7" r="0.45" fill="#fff" opacity="0.7"/><circle cx="215.6" cy="6.1" r="0.45" fill="#fff" opacity="0.7"/><circle cx="152.4" cy="47.5" r="0.45" fill="#fff" opacity="0.7"/><circle cx="51.1" cy="30.6" r="0.45" fill="#fff" opacity="0.7"/><circle cx="9.3" cy="18.3" r="0.45" fill="#fff" opacity="0.7"/><circle cx="145.6" cy="29.5" r="0.45" fill="#fff" opacity="0.7"/><text x="26.6" y="35.8" font-family="Liberation Sans" font-weight="bold" font-size="12.5" letter-spacing="0.3" fill="#fff8ee">OUTDOOR</text>
<text x="26.6" y="47.3" font-family="Liberation Sans" font-weight="bold" font-size="12.5" letter-spacing="0.25" fill="#fff8ee">ADVENTURE</text>
<rect x="27" y="59.5" width="20" height="2.5" rx="1" fill="#fff4e8"/>
</svg></div>
<div class="a" style="left:329px;top:235px;width:1378px;height:817px;background:#e1e1e1"></div>
<div class="a" style="left:0;top:235px;width:1728px;height:4.5px;background:linear-gradient(#cecece,rgba(227,227,227,0))"></div>
<div class="a" style="left:350px;top:238px;width:1343.5px;height:17.7px;background:#fff"></div>
<div class="a rn" style="left:1017.2px;top:242px;width:8.5px;text-align:center">0</div>
<div class="a rn" style="left:1056.9px;top:242px;width:8.5px;text-align:center">1</div>
<div class="a rn" style="left:977.6px;top:242px;width:8.5px;text-align:center">1</div>
<div class="a rn" style="left:1096.6px;top:242px;width:8.5px;text-align:center">2</div>
<div class="a rn" style="left:937.9px;top:242px;width:8.5px;text-align:center">2</div>
<div class="a rn" style="left:1136.3px;top:242px;width:8.5px;text-align:center">3</div>
<div class="a rn" style="left:898.2px;top:242px;width:8.5px;text-align:center">3</div>
<div class="a rn" style="left:1176.0px;top:242px;width:8.5px;text-align:center">4</div>
<div class="a rn" style="left:858.5px;top:242px;width:8.5px;text-align:center">4</div>
<div class="a rn" style="left:1215.7px;top:242px;width:8.5px;text-align:center">5</div>
<div class="a rn" style="left:818.9px;top:242px;width:8.5px;text-align:center">5</div>
<div class="a rn" style="left:1255.3px;top:242px;width:8.5px;text-align:center">6</div>
<div class="a rn" style="left:779.2px;top:242px;width:8.5px;text-align:center">6</div>
<div class="a rn" style="left:1295.0px;top:242px;width:8.5px;text-align:center">7</div>
<div class="a rn" style="left:739.5px;top:242px;width:8.5px;text-align:center">7</div>
<div class="a rn" style="left:1334.7px;top:242px;width:8.5px;text-align:center">8</div>
<div class="a rn" style="left:699.8px;top:242px;width:8.5px;text-align:center">8</div>
<div class="a rn" style="left:1374.4px;top:242px;width:8.5px;text-align:center">9</div>
<div class="a rn" style="left:660.1px;top:242px;width:8.5px;text-align:center">9</div>
<div class="a rn" style="left:1410.5px;top:242px;width:15.5px;text-align:center">10</div>
<div class="a rn" style="left:617.0px;top:242px;width:15.5px;text-align:center">10</div>
<div class="a rn" style="left:1450.2px;top:242px;width:15.5px;text-align:center">11</div>
<div class="a rn" style="left:577.3px;top:242px;width:15.5px;text-align:center">11</div>
<div class="a rn" style="left:1489.9px;top:242px;width:15.5px;text-align:center">12</div>
<div class="a rn" style="left:537.6px;top:242px;width:15.5px;text-align:center">12</div>
<div class="a rn" style="left:1529.6px;top:242px;width:15.5px;text-align:center">13</div>
<div class="a rn" style="left:497.9px;top:242px;width:15.5px;text-align:center">13</div>
<div class="a rn" style="left:1569.3px;top:242px;width:15.5px;text-align:center">14</div>
<div class="a rn" style="left:458.2px;top:242px;width:15.5px;text-align:center">14</div>
<div class="a rn" style="left:1609.0px;top:242px;width:15.5px;text-align:center">15</div>
<div class="a rn" style="left:418.5px;top:242px;width:15.5px;text-align:center">15</div>
<div class="a rn" style="left:1648.6px;top:242px;width:15.5px;text-align:center">16</div>
<div class="a rn" style="left:378.9px;top:242px;width:15.5px;text-align:center">16</div>
<svg class="a" style="left:0;top:0" width="1728" height="300"><path d="M366.8,244 V249.5 M406.5,244 V249.5 M446.1,244 V249.5 M485.8,244 V249.5 M525.5,244 V249.5 M565.2,244 V249.5 M604.9,244 V249.5 M644.5,244 V249.5 M684.2,244 V249.5 M723.9,244 V249.5 M763.6,244 V249.5 M803.3,244 V249.5 M842.9,244 V249.5 M882.6,244 V249.5 M922.3,244 V249.5 M962.0,244 V249.5 M1001.7,244 V249.5 M1041.3,244 V249.5 M1081.0,244 V249.5 M1120.7,244 V249.5 M1160.4,244 V249.5 M1200.1,244 V249.5 M1239.7,244 V249.5 M1279.4,244 V249.5 M1319.1,244 V249.5 M1358.8,244 V249.5 M1398.5,244 V249.5 M1438.1,244 V249.5 M1477.8,244 V249.5 M1517.5,244 V249.5 M1557.2,244 V249.5 M1596.9,244 V249.5 M1636.5,244 V249.5 M1676.2,244 V249.5" stroke="#6e6e6e" stroke-width="1.1"/><path d="M356.9,246.3 V248.3 M376.7,246.3 V248.3 M396.5,246.3 V248.3 M416.4,246.3 V248.3 M436.2,246.3 V248.3 M456.1,246.3 V248.3 M475.9,246.3 V248.3 M495.7,246.3 V248.3 M515.6,246.3 V248.3 M535.4,246.3 V248.3 M555.3,246.3 V248.3 M575.1,246.3 V248.3 M594.9,246.3 V248.3 M614.8,246.3 V248.3 M634.6,246.3 V248.3 M654.5,246.3 V248.3 M674.3,246.3 V248.3 M694.1,246.3 V248.3 M714.0,246.3 V248.3 M733.8,246.3 V248.3 M753.7,246.3 V248.3 M773.5,246.3 V248.3 M793.3,246.3 V248.3 M813.2,246.3 V248.3 M833.0,246.3 V248.3 M852.9,246.3 V248.3 M872.7,246.3 V248.3 M892.5,246.3 V248.3 M912.4,246.3 V248.3 M932.2,246.3 V248.3 M952.1,246.3 V248.3 M971.9,246.3 V248.3 M991.7,246.3 V248.3 M1011.6,246.3 V248.3 M1031.4,246.3 V248.3 M1051.3,246.3 V248.3 M1071.1,246.3 V248.3 M1090.9,246.3 V248.3 M1110.8,246.3 V248.3 M1130.6,246.3 V248.3 M1150.5,246.3 V248.3 M1170.3,246.3 V248.3 M1190.1,246.3 V248.3 M1210.0,246.3 V248.3 M1229.8,246.3 V248.3 M1249.7,246.3 V248.3 M1269.5,246.3 V248.3 M1289.3,246.3 V248.3 M1309.2,246.3 V248.3 M1329.0,246.3 V248.3 M1348.9,246.3 V248.3 M1368.7,246.3 V248.3 M1388.5,246.3 V248.3 M1408.4,246.3 V248.3 M1428.2,246.3 V248.3 M1448.1,246.3 V248.3 M1467.9,246.3 V248.3 M1487.7,246.3 V248.3 M1507.6,246.3 V248.3 M1527.4,246.3 V248.3 M1547.3,246.3 V248.3 M1567.1,246.3 V248.3 M1586.9,246.3 V248.3 M1606.8,246.3 V248.3 M1626.6,246.3 V248.3 M1646.5,246.3 V248.3 M1666.3,246.3 V248.3 M1686.1,246.3 V248.3" stroke="#a6a6a6" stroke-width="1.1"/></svg>
<div class="a" style="left:311.5px;top:277.5px;width:17px;height:755.5px;background:#fff"></div>
<div class="a rn rv" style="left:316.0px;top:649.3px;width:10px;height:12px">0</div>
<div class="a rn rv" style="left:316.0px;top:689.0px;width:10px;height:12px">1</div>
<div class="a rn rv" style="left:316.0px;top:609.6px;width:10px;height:12px">1</div>
<div class="a rn rv" style="left:316.0px;top:728.7px;width:10px;height:12px">2</div>
<div class="a rn rv" style="left:316.0px;top:569.9px;width:10px;height:12px">2</div>
<div class="a rn rv" style="left:316.0px;top:768.3px;width:10px;height:12px">3</div>
<div class="a rn rv" style="left:316.0px;top:530.3px;width:10px;height:12px">3</div>
<div class="a rn rv" style="left:316.0px;top:808.0px;width:10px;height:12px">4</div>
<div class="a rn rv" style="left:316.0px;top:490.6px;width:10px;height:12px">4</div>
<div class="a rn rv" style="left:316.0px;top:847.7px;width:10px;height:12px">5</div>
<div class="a rn rv" style="left:316.0px;top:450.9px;width:10px;height:12px">5</div>
<div class="a rn rv" style="left:316.0px;top:887.4px;width:10px;height:12px">6</div>
<div class="a rn rv" style="left:316.0px;top:411.2px;width:10px;height:12px">6</div>
<div class="a rn rv" style="left:316.0px;top:927.1px;width:10px;height:12px">7</div>
<div class="a rn rv" style="left:316.0px;top:371.5px;width:10px;height:12px">7</div>
<div class="a rn rv" style="left:316.0px;top:966.7px;width:10px;height:12px">8</div>
<div class="a rn rv" style="left:316.0px;top:331.9px;width:10px;height:12px">8</div>
<div class="a rn rv" style="left:316.0px;top:1006.4px;width:10px;height:12px">9</div>
<div class="a rn rv" style="left:316.0px;top:292.2px;width:10px;height:12px">9</div>
<svg class="a" style="left:0;top:0" width="400" height="1080"><path d="M317,278.3 H322.5 M317,318.0 H322.5 M317,357.7 H322.5 M317,397.4 H322.5 M317,437.1 H322.5 M317,476.7 H322.5 M317,516.4 H322.5 M317,556.1 H322.5 M317,595.8 H322.5 M317,635.5 H322.5 M317,675.1 H322.5 M317,714.8 H322.5 M317,754.5 H322.5 M317,794.2 H322.5 M317,833.9 H322.5 M317,873.5 H322.5 M317,913.2 H322.5 M317,952.9 H322.5 M317,992.6 H322.5 M317,1032.3 H322.5" stroke="#6e6e6e" stroke-width="1.1"/><path d="M319,288.3 H321 M319,308.1 H321 M319,327.9 H321 M319,347.8 H321 M319,367.6 H321 M319,387.5 H321 M319,407.3 H321 M319,427.1 H321 M319,447.0 H321 M319,466.8 H321 M319,486.7 H321 M319,506.5 H321 M319,526.3 H321 M319,546.2 H321 M319,566.0 H321 M319,585.9 H321 M319,605.7 H321 M319,625.5 H321 M319,645.4 H321 M319,665.2 H321 M319,685.1 H321 M319,704.9 H321 M319,724.7 H321 M319,744.6 H321 M319,764.4 H321 M319,784.3 H321 M319,804.1 H321 M319,823.9 H321 M319,843.8 H321 M319,863.6 H321 M319,883.5 H321 M319,903.3 H321 M319,923.1 H321 M319,943.0 H321 M319,962.8 H321 M319,982.7 H321 M319,1002.5 H321 M319,1022.3 H321" stroke="#a6a6a6" stroke-width="1.1"/></svg>
<!-- SLIDE -->
<div class="a" style="left:349px;top:276px;width:1344.5px;height:757.5px;background:#fff;box-shadow:0 0 0 0.6px #cfcfcf"></div>
<svg class="a" style="left:349px;top:276px" width="1344" height="757" viewBox="0 0 1344 757">
<defs>
<linearGradient id="fadeL" gradientUnits="userSpaceOnUse" x1="44" y1="0" x2="58" y2="0"><stop offset="0" stop-color="#9a9a9a" stop-opacity="0"/><stop offset="1" stop-color="#9a9a9a"/></linearGradient>
<linearGradient id="fadeT" gradientUnits="userSpaceOnUse" x1="0" y1="49.5" x2="0" y2="56"><stop offset="0" stop-color="#9a9a9a" stop-opacity="0"/><stop offset="1" stop-color="#9a9a9a"/></linearGradient>
<filter id="blur8" x="-50%" y="-50%" width="200%" height="200%"><feGaussianBlur stdDeviation="25"/></filter>
</defs>
<path d="M44,107.8 H139.5" stroke="url(#fadeL)" stroke-width="1.6" fill="none"/>
<path d="M148.5,56 V98.5 Q148.5,107.8 139.2,107.8" stroke="#9a9a9a" stroke-width="1.6" fill="none"/>
<path d="M148.5,49.5 V56.5" stroke="url(#fadeT)" stroke-width="1.6" fill="none"/>
<rect x="440" y="262" width="444" height="235" fill="#1a1a30" opacity="0.1" filter="url(#blur8)"/>
</svg>
<div class="a" style="left:606px;top:276.5px;width:830.5px;height:256.5px;background:#fff;border:1.6px solid #4a4b5c"></div>
<div class="a" style="left:606px;top:777.5px;width:830.5px;height:256px;background:#fff;border:1.6px solid #4a4b5c;border-bottom:1.2px solid #4a4b5c"></div>
<svg class="a" style="left:803px;top:532.6px" width="436.4" height="245" preserveAspectRatio="none"><use href="#mtn" width="436.4" height="245"/></svg>

<!-- RIGHT SCROLLBAR -->
<div class="a" style="left:1707.5px;top:236px;width:20.5px;height:816px;background:#e1e1e1"></div>
<div class="a" style="left:1707.5px;top:255.5px;width:20px;height:713px;background:#d4d4d4"></div>
<div class="a" style="left:1707.5px;top:236px;width:20px;height:19.5px;background:#fff;border:1px solid #cfcfcf"></div>
<svg class="a" style="left:1712px;top:242px" width="11" height="7" viewBox="0 0 11 7"><path d="M0.5,6.5 L5.5,1 L10.5,6.5Z" fill="#555"/></svg>
<div class="a" style="left:1707.5px;top:450px;width:20px;height:64px;background:#fff;border:1px solid #cfcfcf"></div>
<div class="a" style="left:1707.5px;top:968.5px;width:20px;height:19px;background:#fff;border:1px solid #cfcfcf"></div>
<svg class="a" style="left:1712px;top:975px" width="11" height="7" viewBox="0 0 11 7"><path d="M0.5,0.5 L5.5,6 L10.5,0.5Z" fill="#555"/></svg>
<svg class="a" style="left:1711px;top:992px" width="12" height="32" viewBox="0 0 12 32" fill="#555"><path d="M0.5,6 L6,0.5 L11.5,6Z M0.5,12 L6,6.5 L11.5,12Z M0.5,20 L6,25.5 L11.5,20Z M0.5,26 L6,31.5 L11.5,26Z"/></svg>

<!-- STATUS BAR -->
<div class="a" style="left:0;top:1051.5px;width:1728px;height:1.8px;background:#d2d2d2"></div>
<div class="a" style="left:0;top:1053px;width:1728px;height:25.5px;background:#f0f0f0"></div>
<div class="a" style="left:0;top:1078.3px;width:1728px;height:1.7px;background:#1e1e1e"></div>
<div class="a" style="left:9.3px;top:1061.5px;font-size:12.5px;color:#444">Slide 4 of 11</div>
<svg class="a" style="left:99px;top:1058px" width="18" height="18" viewBox="0 0 18 18" fill="none" stroke="#444" stroke-width="1.2"><path d="M1,1.5 C4,1 6,1 8.5,2.5 V15.5 C6,14 4,14 1,14.5Z M8.5,2.5 C11,1 13,1 16,1.5 V9 M8.5,15.5 L10.5,14.8"/><path d="M10.5,12 L13,15 L17,9.5"/></svg>
<div class="a" style="left:137.5px;top:1061.5px;font-size:12.5px;color:#444">Lithuanian</div>
<svg class="a" style="left:1214px;top:1057px" width="21" height="20" viewBox="0 0 21 20" fill="none" stroke="#555" stroke-width="1.2"><path d="M6,5 L10.5,1 L15,5 M1,9 H20 M1,13.5 H20 M1,18 H20"/></svg>
<div class="a" style="left:1237px;top:1061.5px;font-size:12.5px;color:#444">Notes</div>
<div class="a" style="left:1291.5px;top:1053px;width:47px;height:25.5px;background:#cbcbcb"></div>
<svg class="a" style="left:1306px;top:1059px" width="19" height="16" viewBox="0 0 19 16" fill="none" stroke="#444" stroke-width="1.2"><rect x="1" y="1" width="17" height="14"/><path d="M4,1 V15"/><rect x="7" y="4" width="8" height="5"/></svg>
<svg class="a" style="left:1354px;top:1059px" width="19" height="16" viewBox="0 0 19 16" fill="none" stroke="#444" stroke-width="1.2"><rect x="1" y="1" width="7" height="5.5"/><rect x="11" y="1" width="7" height="5.5"/><rect x="1" y="9.5" width="7" height="5.5"/><rect x="11" y="9.5" width="7" height="5.5"/></svg>
<svg class="a" style="left:1402px;top:1058px" width="17" height="18" viewBox="0 0 17 18" fill="none" stroke="#444" stroke-width="1.1"><path d="M1,1.5 H7 L8.5,3 L10,1.5 H16 V15.5 H10 L8.5,17 L7,15.5 H1Z M8.5,3 V17 M3,5 H6.5 M3,8 H6.5 M3,11 H6.5 M11,5 H14 M11,8 H14 M11,11 H14"/></svg>
<svg class="a" style="left:1450px;top:1058px" width="17" height="18" viewBox="0 0 17 18" fill="none" stroke="#444" stroke-width="1.2"><path d="M1,1 H16 M2.5,1 V10.5 H14.5 V1 M8.5,10.5 V16.5 M4.5,17 H12.5 M6,4.5 H11"/></svg>
<svg class="a" style="left:1490px;top:1065px" width="10" height="3" viewBox="0 0 10 3"><path d="M0.5,1.5 H9.5" stroke="#555" stroke-width="1.1"/></svg>
<div class="a" style="left:1506.5px;top:1066px;width:119px;height:1.2px;background:#a8a8a8"></div>
<div class="a" style="left:1565.5px;top:1063px;width:1px;height:7px;background:#a8a8a8"></div>
<div class="a" style="left:1556px;top:1060px;width:6px;height:13px;background:#6a6a6a"></div>
<svg class="a" style="left:1631px;top:1060px" width="11" height="12" viewBox="0 0 11 12"><path d="M0.5,6 H10.5 M5.5,1 V11" stroke="#555" stroke-width="1.1"/></svg>
<div class="a" style="left:1656.5px;top:1061.5px;font-size:12px;color:#444">88 %</div>
<svg class="a" style="left:1704px;top:1056px" width="20" height="20" viewBox="0 0 20 20" fill="none" stroke="#444" stroke-width="1.2"><rect x="5.5" y="5.5" width="9" height="9"/><path d="M10,1 L7.5,3.5 M10,1 L12.5,3.5 M10,19 L7.5,16.5 M10,19 L12.5,16.5 M1,10 L3.5,7.5 M1,10 L3.5,12.5 M19,10 L16.5,7.5 M19,10 L16.5,12.5"/></svg>
</body></html>
